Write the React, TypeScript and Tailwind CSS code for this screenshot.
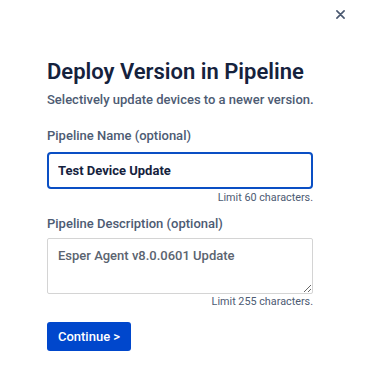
import React, { useState } from 'react';

export default function App() {
  const [name, setName] = useState('Test Device Update');
  const [desc, setDesc] = useState('Esper Agent v8.0.0601 Update');

  return (
    <div
      className="relative h-[380px] w-[366px] bg-white"
      style={{ fontFamily: 'Roboto, "Noto Sans", sans-serif' }}
    >
      {/* close */}
      <button className="absolute right-[20px] top-[8px] flex h-[12px] w-[12px] items-center justify-center text-[#4a5870]">
        <svg width="9" height="9" viewBox="0 0 10 10" fill="none">
          <path d="M1 1l8 8M9 1l-8 8" stroke="currentColor" strokeWidth="1.8" strokeLinecap="round" />
        </svg>
      </button>

      <div className="flex flex-col px-[47px] pt-[57px]">
        <h1 className="text-[22px] font-semibold leading-[29px] text-[#15223d]">Deploy Version in Pipeline</h1>
        <p className="mt-[5px] text-[13px] font-medium leading-[18px] text-[#4d5b73]">
          Selectively update devices to a newer version.
        </p>

        <label className="mt-[18px] text-[13px] font-medium leading-[18px] text-[#4d5b73]">Pipeline Name (optional)</label>
        <input
          value={name}
          onChange={(e) => setName(e.target.value)}
          className="mt-[7px] h-[37px] w-[266px] rounded-[4px] border-2 border-[#0a4fc4] px-[9px] text-[13px] font-bold text-[#15223d] outline-none"
        />
        <div className="mt-[2px] w-[266px] text-right text-[10.8px] leading-[14px] text-[#4d5b73]">Limit 60 characters.</div>

        <label className="mt-[10px] text-[13px] font-medium leading-[18px] text-[#4d5b73]">Pipeline Description (optional)</label>
        <textarea
          value={desc}
          onChange={(e) => setDesc(e.target.value)}
          className="mt-[5px] h-[56px] w-[266px] rounded-[2px] border border-[#d4d4d4] px-[10px] py-[7px] text-[13px] font-medium text-[#5b6470] outline-none"
        />
        <div className="mt-[1px] w-[266px] text-right text-[10.8px] leading-[14px] text-[#4d5b73]">Limit 255 characters.</div>

        <button className="mt-[13px] h-[29px] w-[84px] rounded-[3px] bg-[#0047cc] text-[13px] font-medium text-white">
          Continue &gt;
        </button>
      </div>
    </div>
  );
}
